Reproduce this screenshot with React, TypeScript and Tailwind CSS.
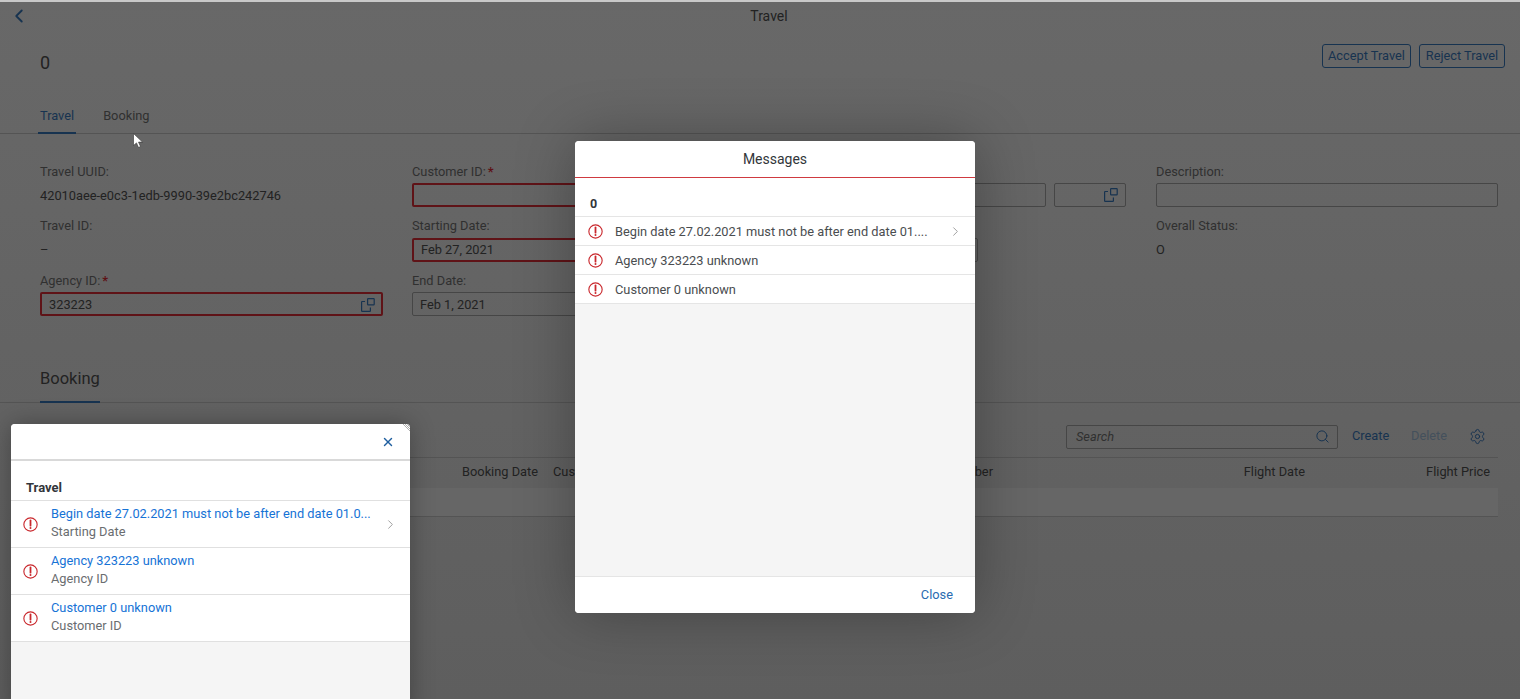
import { ChevronLeft, ChevronRight, Search, Settings, X } from "lucide-react"

const font = { fontFamily: 'Roboto, "Noto Sans", sans-serif' }

// value help icon of the input fields
function ValueHelp({ className }: { className?: string }) {
  return (
    <svg viewBox="0 0 14 14" className={className} fill="none" stroke="currentColor" strokeWidth="1.2">
      <path d="M4 3.5H1.2a.6.6 0 0 0-.6.6v8.7c0 .3.3.6.6.6h7.6c.3 0 .6-.3.6-.6V9.5" />
      <rect x="6.6" y="0.7" width="6.6" height="6.2" rx="0.6" />
    </svg>
  )
}

function ErrorIcon() {
  return (
    <svg viewBox="0 0 16 16" className="h-[15px] w-[15px] shrink-0" fill="none">
      <circle cx="8" cy="8" r="7.1" stroke="#c9282d" strokeWidth="1.2" />
      <path d="M8 3.6v5.6" stroke="#c9282d" strokeWidth="1.9" strokeLinecap="round" />
      <circle cx="8" cy="11.7" r="1.05" fill="#c9282d" />
    </svg>
  )
}

function Label({ text, required }: { text: string; required?: boolean }) {
  return (
    <div className="flex h-[23px] items-center text-[12.8px] text-[#303030]">
      {text}
      {required && <span className="ml-[2px] font-bold text-[#5e1216]">*</span>}
    </div>
  )
}

function Field({
  label,
  required,
  value,
  error,
  help,
}: {
  label: string
  required?: boolean
  value?: string
  error?: boolean
  help?: boolean
}) {
  return (
    <div className="h-[54.5px]">
      <Label text={label} required={required} />
      <div
        className={`flex h-6 items-center justify-between rounded-[2px] pl-[7px] pr-[6px] pt-px text-[12.8px] text-[#222222] ${
          error ? "border-2 border-[#5f1317]" : "border border-[#464646]"
        }`}
      >
        <span>{value}</span>
        {help && <ValueHelp className="h-[14px] w-[14px] text-[#173350]" />}
      </div>
    </div>
  )
}

function Text({ label, value }: { label: string; value: string }) {
  return (
    <div className="h-[54.5px]">
      <Label text={label} />
      <div className="flex h-6 items-center pt-px text-[12.8px] text-[#222222]">{value}</div>
    </div>
  )
}

const messages = [
  { title: "Begin date 27.02.2021 must not be after end date 01.0...", full: "Begin date 27.02.2021 must not be after end date 01....", sub: "Starting Date", more: true },
  { title: "Agency 323223 unknown", full: "Agency 323223 unknown", sub: "Agency ID", more: false },
  { title: "Customer 0 unknown", full: "Customer 0 unknown", sub: "Customer ID", more: false },
]

export default function App() {
  return (
    <div className="relative h-[699px] overflow-hidden bg-linear-to-b from-[#686868] to-[#5e5e5e]" style={font}>
      {/* page behind the dim */}
      <header className="relative flex h-[33px] items-center justify-center border-t-2 border-[#c9c9c9] text-[14px] text-[#222222]">
        <ChevronLeft className="absolute left-[8px] top-[2px] h-[24px] w-[22px] text-[#173350]" strokeWidth={2} />
        <span className="mb-[2px] ml-[18px]">Travel</span>
      </header>

      <section className="flex h-[64px] justify-between pl-10 pr-[15px] pt-[11px]">
        <div className="pt-[6px] text-[18px] leading-[26px] text-[#222222]">0</div>
        <div className="flex h-6 gap-2">
          <button className="w-[89px] rounded-[3px] border border-[#173350] pb-px text-[12.8px] text-[#173350]">Accept Travel</button>
          <button className="w-[86px] rounded-[3px] border border-[#173350] pb-px text-[12.8px] text-[#173350]">Reject Travel</button>
        </div>
      </section>

      <nav className="flex h-[37px] gap-[29px] border-b border-[#545454] pl-10 text-[12.8px]">
        <div className="relative pt-[9px] text-[#173350]">
          Travel
          <div className="absolute -bottom-px -left-[2px] -right-[2px] h-[2px] bg-[#173350]" />
        </div>
        <div className="pt-[9px] text-[#303030]">Booking</div>
      </nav>

      <section className="grid h-[222px] grid-cols-[343px_343px_343px_342px] gap-x-[29px] pl-10 pt-[26px]">
        <div>
          <Text label="Travel UUID:" value="42010aee-e0c3-1edb-9990-39e2bc242746" />
          <Text label="Travel ID:" value="–" />
          <Field label="Agency ID:" required value="323223" error help />
        </div>
        <div>
          <Field label="Customer ID:" required error />
          <Field label="Starting Date:" value="Feb 27, 2021" error />
          <Field label="End Date:" value="Feb 1, 2021" />
        </div>
        <div>
          <div className="h-[54.5px] pt-[23px]">
            <div className="flex gap-2">
              <div className="h-6 w-[262px] rounded-[2px] border border-[#464646]" />
              <div className="flex h-6 w-[72px] items-center justify-end rounded-[2px] border border-[#464646] pr-[7px]">
                <ValueHelp className="h-[14px] w-[14px] text-[#173350]" />
              </div>
            </div>
          </div>
          <div className="h-[54.5px] pt-[23px]">
            <div className="h-6 w-[194px] rounded-[2px] border border-[#464646]" />
          </div>
        </div>
        <div>
          <Field label="Description:" />
          <Text label="Overall Status:" value="O" />
        </div>
      </section>

      <section className="flex h-[47px] border-b border-[#545454] pl-10">
        <div className="h-[47px] border-b-2 border-[#173350] pt-[9px] text-[16.5px] leading-[28px] text-[#222222]">Booking</div>
      </section>

      <section className="flex h-[54px] items-start justify-end pr-[34px] pt-[22px] text-[12.8px]">
        <div className="flex h-6 w-[272px] items-center justify-between rounded-[2px] border border-[#464646] pb-px pl-[9px] pr-[7px]">
          <span className="italic text-[#303030]">Search</span>
          <Search className="h-[15px] w-[15px] text-[#173350]" strokeWidth={1.6} />
        </div>
        <span className="ml-[14px] mt-[1px] w-[38px] text-[#173350]">Create</span>
        <span className="ml-[21px] mt-[1px] w-[37px] text-[#44505c]">Delete</span>
        <Settings className="ml-[21px] mt-[3px] h-[17px] w-[17px] text-[#173350]" strokeWidth={1.4} />
      </section>

      <section className="ml-10 mr-[22px] text-[12.8px] text-[#222222]">
        <div className="flex h-[31px] items-center border-t border-[#545454] pb-[3px]">
          <div className="w-[498px] text-right">Booking Date</div>
          <div className="ml-[15px] flex w-[440px] justify-between">
            <span>Customer ID</span>
            <span>Connection Number</span>
          </div>
          <div className="w-[312px] text-right">Flight Date</div>
          <div className="w-[185px] text-right">Flight Price</div>
        </div>
        <div className="h-[29px] border-b border-[#545454] bg-[#666666]" />
      </section>

      {/* message popover */}
      <aside className="absolute left-[11px] top-[424px] flex h-[290px] w-[399px] flex-col overflow-hidden rounded-t-[4px] bg-[#f5f5f5] shadow-[0_0_24px_rgba(0,0,0,0.3)]">
        <div className="flex h-[37px] shrink-0 items-start justify-end border-b-2 border-[#d9d9d9] bg-white pr-[15px] pt-[11px]">
          <X className="h-[14px] w-[14px] text-[#1f5f9f]" strokeWidth={2.4} />
        </div>
        <div className="flex h-[40px] shrink-0 items-end border-b border-[#e0e0e0] bg-white pb-[3px] pl-[15px] text-[13px] font-bold text-[#32363a]">
          Travel
        </div>
        {messages.map((m) => (
          <div key={m.sub} className="flex h-[47px] shrink-0 items-center border-b border-[#e0e0e0] bg-white pl-[12px] pr-[12px]">
            <ErrorIcon />
            <div className="ml-[13px] flex-1 whitespace-nowrap pb-[3px] text-[12.8px]">
              <div className="leading-[18px] text-[#1673d6]">{m.title}</div>
              <div className="leading-[18px] text-[#6a6d70]">{m.sub}</div>
            </div>
            {m.more && <ChevronRight className="h-[15px] w-[15px] text-[#9a9a9a]" strokeWidth={1.5} />}
          </div>
        ))}
        <svg viewBox="0 0 8 8" className="absolute right-0 top-0 h-2 w-2" stroke="#9a9a9a" strokeWidth="0.8">
          <path d="M1 0l7 7M3 0l5 5M5 0l3 3" />
        </svg>
      </aside>

      {/* messages dialog */}
      <div className="absolute left-[575px] top-[141px] flex h-[472px] w-[400px] flex-col overflow-hidden rounded-[4px] bg-[#f5f5f5] shadow-[0_0_60px_rgba(0,0,0,0.3)]">
        <div className="flex h-[37px] shrink-0 items-center justify-center border-b border-[#cf3a40] bg-white pt-[1px] text-[14px] text-[#32363a]">
          Messages
        </div>
        <div className="flex h-[39px] shrink-0 items-end border-b border-[#e5e5e5] bg-white pb-[2px] pl-[15px] text-[12.5px] font-bold text-[#32363a]">
          0
        </div>
        {messages.map((m) => (
          <div key={m.sub} className="flex h-[29px] shrink-0 items-center border-b border-[#e5e5e5] bg-white pl-[13px] pr-[12px]">
            <ErrorIcon />
            <span className="ml-[12px] flex-1 pt-px text-[12.8px] text-[#4a4d50]">{m.full}</span>
            {m.more && <ChevronRight className="h-[15px] w-[15px] text-[#9a9a9a]" strokeWidth={1.5} />}
          </div>
        ))}
        <div className="flex-1" />
        <div className="flex h-[37px] shrink-0 items-center justify-end border-t border-[#e5e5e5] bg-white pr-[22px] text-[12.8px] text-[#2a6cb0]">
          Close
        </div>
      </div>

      {/* mouse pointer */}
      <svg viewBox="0 0 10 16" className="absolute left-[133px] top-[133px] h-[16px] w-[10px]">
        <path d="M0.5 0.5v12l3-2.6 2 4.6 2-1-2-4.4h4z" fill="#fff" stroke="#333" strokeWidth="0.6" />
      </svg>
    </div>
  )
}
